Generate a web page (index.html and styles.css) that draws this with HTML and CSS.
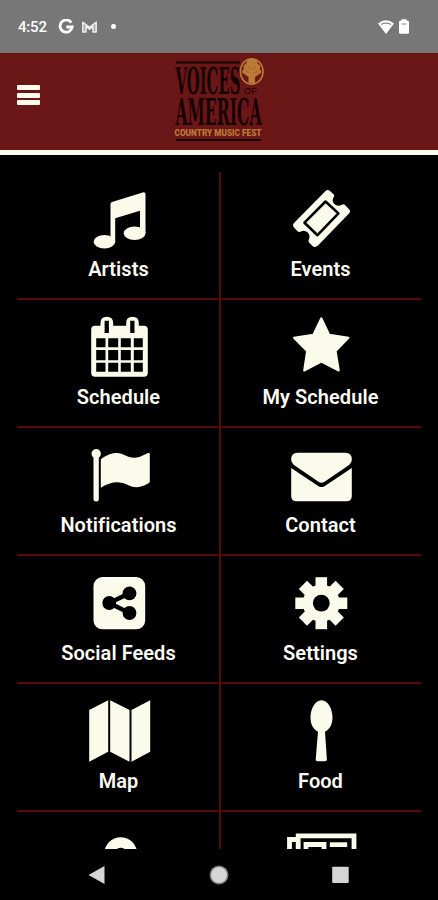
FILE: index.html
```html
<!DOCTYPE html>
<html lang="en">
<head>
  <meta charset="UTF-8" />
  <meta name="viewport" content="width=device-width, initial-scale=1.0"/>
  <title>Voices of America - Country Music Fest</title>
  <link rel="stylesheet" href="styles.css">
</head>
<body>

  <!-- Status Bar -->
  <div class="status-bar">
    <span class="clock">4:52</span>
    <svg class="google" width="16" height="16" viewBox="0 0 16 16"><path d="M13.2 3.6A6.1 6.1 0 1 0 14.2 8H8.3" fill="none" stroke="#fff" stroke-width="2.8"/></svg>
    <svg class="gmail" width="17" height="13" viewBox="0 0 17 13"><path d="M1.8 12V2.2L8.5 7.2 15.2 2.2V12H12V6.5L8.5 9.3 5 6.5V12Z" fill="#aaa" stroke="#f4f4f4" stroke-width="1.4" stroke-linejoin="round"/></svg>
    <span class="dot"></span>
    <svg class="wifi" width="16" height="14" viewBox="0 0 16 14"><path d="M0 3.6Q8-3 16 3.6L8 14Z" fill="#fff"/><path d="M3 4.6Q8 1.8 13 4.6" fill="none" stroke="#8a8a8a" stroke-width="1.2"/></svg>
    <svg class="battery" width="10" height="15" viewBox="0 0 10 15"><path d="M1.2 1.8H2.5V.2H7.5V1.8H8.8Q10 1.8 10 3V13.6Q10 14.8 8.8 14.8H1.2Q0 14.8 0 13.6V3Q0 1.8 1.2 1.8Z" fill="#fff"/><path d="M2.5 5H7.5" stroke="#999" stroke-width="1.2"/></svg>
  </div>

  <!-- Header -->
  <header class="header">
    <button class="menu-button" aria-label="Menu"><span></span><span></span><span></span></button>
    <svg class="logo" width="94" height="86" viewBox="0 0 94 86">
      <path d="M5 5.5H69M5 83H90" stroke="#160304" stroke-width="2"/>
      <text class="logo-big" x="4.500" y="37" textLength="65" lengthAdjust="spacingAndGlyphs">VOICES</text>
      <text class="logo-big" x="4.500" y="68" textLength="86" lengthAdjust="spacingAndGlyphs">AMERICA</text>
      <text class="logo-of" x="73" y="37" textLength="13" lengthAdjust="spacingAndGlyphs">OF</text>
      <text class="logo-sub" x="3.500" y="78.500" textLength="87" lengthAdjust="spacingAndGlyphs">COUNTRY MUSIC FEST</text>
      <ellipse cx="80.700" cy="14.500" rx="11.300" ry="12.700" fill="#6b1616" stroke="#bb7a37" stroke-width="1.700"/>
      <path d="M77.500 26V20L71.500 16Q70.500 13 73 12Q71 8 75 7Q76 2 80.700 1Q86 2 87 7Q91 8 88.500 12Q91 13 90 16L84 20V26Z" fill="#bb7a37"/>
      <path d="M76 9L79.500 12M85 9L82 12M75 14L78 16M86.500 14L83.500 16" stroke="#96552a" stroke-width=".7"/>
    </svg>
  </header>

  <!-- Menu Grid -->
  <main class="menu">
    <div class="menu-grid">
      <a class="menu-item">
        <svg class="icon" viewBox="0 0 80 68"><path d="M31.500 19Q31.500 17.500 33 17L64.500 7.200Q66.500 7 66.500 9V48H61V25.700L36.200 33.300V57H31.500Z"/><ellipse cx="25.400" cy="56.700" rx="10.800" ry="6.700"/><ellipse cx="55.600" cy="48.200" rx="10.900" ry="6.700"/></svg>
        <span>Artists</span>
      </a>
      <a class="menu-item">
        <svg class="icon" viewBox="0 0 80 68"><path d="M44.500 6Q46.800 4 49 6L53 9.700Q53.800 11 52.500 12.500Q50.500 15.500 53 18.800Q56.500 22 60.500 20Q62.500 18.700 64 20L68 24.200Q70 26.200 68 28.500L37 60.500Q34.200 63 31.500 61L28 57.500Q26.800 56 28 54Q29.500 50.500 26.800 47.500Q23.500 44.500 20.500 46.300Q18 47.800 16.500 46.300L13 42.500Q11 40.200 13 38Z"/><path class="cut-line" d="M44.500 16.500L57.400 28.400 36.500 50.200 23.500 37.700Z"/></svg>
        <span>Events</span>
      </a>
      <a class="menu-item">
        <svg class="icon" viewBox="0 0 80 68"><path fill-rule="evenodd" d="M16 12.700H21.500V10Q21.500 3.700 27.800 3.700T34.200 10V12.700H47.200V10Q47.200 3.700 53.500 3.700T59.800 10V12.700H65Q68.800 12.700 68.800 16.500V60Q68.800 63.700 65 63.700H16Q12.200 63.700 12.200 60V16.500Q12.200 12.700 16 12.700ZM25.600 7.700V20H29.900V7.700ZM51.200 7.700V20H55.500V7.700ZM17.200 25.300V34.300H26.500V25.300ZM29.200 25.300V34.300H39.200V25.300ZM41.800 25.300V34.300H51.800V25.300ZM54.800 25.300V34.300H63.800V25.300ZM17.200 37V47.300H26.500V37ZM29.200 37V47.300H39.200V37ZM41.800 37V47.300H51.800V37ZM54.800 37V47.300H63.800V37ZM17.200 49.700V58.700H26.500V49.700ZM29.200 49.700V58.700H39.200V49.700ZM41.800 49.700V58.700H51.800V49.700ZM54.800 49.700V58.700H63.800V49.700Z"/></svg>
        <span>Schedule</span>
      </a>
      <a class="menu-item">
        <svg class="icon" viewBox="0 0 80 68"><path class="rounded" d="M40.300 5.300L48.200 21.800 67.500 24.800 54.600 38 57.800 57.500 40.300 48.700 23.200 57.500 26.100 38 13 24.800 32.400 21.800Z"/></svg>
        <span>My Schedule</span>
      </a>
      <a class="menu-item">
        <svg class="icon" viewBox="0 0 80 68"><circle cx="17.200" cy="12.700" r="4.700"/><path d="M14.500 14H19.800V58Q19.800 60.500 17.200 60.500T14.500 58Z"/><path d="M21.800 18.300C28 13.500 36 10.500 43 13C50 16 54 18 61 15.700L69 12Q70.800 11.500 70.800 13V40.500Q70.800 41.500 69.500 42.300C62 46.500 56 47.500 50 44.500C40 39.500 32 40.500 21.800 46.800Z"/></svg>
        <span>Notifications</span>
      </a>
      <a class="menu-item">
        <svg class="icon" viewBox="0 0 80 68"><path d="M10.200 18.500Q10.200 11.700 16.500 11.700H64.500Q70.800 11.700 70.800 18.500Q70.800 22 67 24.700L43.500 40.800Q40.500 42.500 37.500 40.800L14 24.700Q10.200 22 10.200 18.500Z"/><path d="M10.200 27L37.500 45.200Q40.500 47 43.500 45.200L70.800 27V55Q70.800 60.300 65.500 60.300H15.500Q10.200 60.300 10.200 55Z"/></svg>
        <span>Contact</span>
      </a>
      <a class="menu-item">
        <svg class="icon" viewBox="0 0 80 68"><rect x="14.500" y="8" width="51.700" height="52.300" rx="9"/><path class="share-line" d="M50.500 24.300L30.200 34 50.500 44"/><g class="cut"><circle cx="30.200" cy="34" r="6.900"/><circle cx="50.500" cy="24.300" r="6.900"/><circle cx="50.500" cy="44" r="6.900"/></g></svg>
        <span>Social Feeds</span>
      </a>
      <a class="menu-item">
        <svg class="icon" viewBox="0 0 80 68"><g transform="translate(40.300 34.200)"><circle r="18.500"/><path id="teeth" d="M-5.800-17V-26H5.800V26H-5.800Z"/><use href="#teeth" transform="rotate(45)"/><use href="#teeth" transform="rotate(90)"/><use href="#teeth" transform="rotate(135)"/><circle class="cut" r="8.400"/></g></svg>
        <span>Settings</span>
      </a>
      <a class="menu-item">
        <svg class="icon" viewBox="0 0 80 68"><path d="M10.200 13L29.200 3.300V54.800L10.200 64.700ZM31.200 3.300L50.500 13V64.700L31.200 54.800ZM52.500 13L71.200 3.300V54.800L52.500 64.700Z"/></svg>
        <span>Map</span>
      </a>
      <a class="menu-item">
        <svg class="icon" viewBox="0 0 80 68"><path d="M40.500 3.300C47 3.300 51.500 12 51.500 20.500C51.500 27.500 48.500 32.500 44 34.700L45.900 62.500Q46 64.300 44 64.300H36.500Q34.600 64.300 34.700 62.500L37 34.700C32.500 32.500 29.500 27.500 29.500 20.500C29.500 12 34 3.300 40.500 3.300Z"/></svg>
        <span>Food</span>
      </a>
      <a class="menu-item">
        <svg class="icon" viewBox="0 0 80 68"><path fill-rule="evenodd" d="M41.700 12.200A16.500 16.500 0 0 1 58.200 28.700C58.200 41 41.700 62 41.700 62S25.200 41 25.200 28.700A16.500 16.500 0 0 1 41.700 12.200ZM41.700 22.700A6 6 0 1 0 41.700 34.700 6 6 0 1 0 41.700 22.700Z"/></svg>
      </a>
      <a class="menu-item">
        <svg class="icon" viewBox="0 0 80 68"><path class="news-line" d="M14.800 14.500H8.500V58H73V10.800H17.200V58M25 40V19.500H43V40Z"/><path d="M48.800 17.300H66.200V22H48.800Z"/></svg>
      </a>
    </div>
  </main>

  <!-- Android Nav -->
  <nav class="android-nav">
    <svg viewBox="0 0 20 20"><path d="M1.500 10L17.500 1V19Z"/></svg>
    <svg viewBox="0 0 20 20"><circle cx="10" cy="10" r="9.500" fill="#777"/><circle cx="10" cy="10" r="8"/></svg>
    <svg viewBox="0 0 20 20"><rect x="1.200" y="1.700" width="16.500" height="16.300" rx=".8"/></svg>
  </nav>

</body>
</html>
```

FILE: styles.css
```css
body {
  margin: 0;
  height: 900px;
  display: flex;
  flex-direction: column;
  overflow: hidden;
  background: #000;
  font-family: Roboto, "Liberation Sans", sans-serif;
}

.status-bar {
  box-sizing: border-box;
  height: 53px;
  padding: 0 29px 0 18px;
  display: flex;
  align-items: center;
  flex-shrink: 0;
  background: #777;
}

.clock {
  width: 40px;
  color: #fff;
  font-size: 15px;
  font-weight: 500;
  letter-spacing: -0.2px;
}

.gmail {
  margin-left: 7px;
}

.dot {
  width: 5px;
  height: 5px;
  margin-left: 13px;
  border-radius: 50%;
  background: #fff;
}

.wifi {
  margin-left: auto;
}

.battery {
  margin-left: 5px;
}

.header {
  box-sizing: border-box;
  height: 102px;
  padding: 0 20px 0 17px;
  display: grid;
  grid-template-columns: 1fr auto 1fr;
  flex-shrink: 0;
  background: #6b1616;
  border-bottom: 5px solid #fffbed;
}

.menu-button {
  width: 23px;
  height: 20px;
  margin-top: 32px;
  padding: 0;
  display: flex;
  flex-direction: column;
  justify-content: space-between;
  border: none;
  background: none;
}

.menu-button span {
  height: 5px;
  border-radius: 1px;
  background: #fffbed;
}

.logo {
  margin-top: 4px;
  overflow: visible;
}

.logo-big {
  fill: #160304;
  font-family: "DejaVu Serif Condensed", "DejaVu Serif", serif;
  font-size: 37px;
  font-weight: bold;
}

.logo-of {
  fill: #160304;
  font-family: "Liberation Sans", sans-serif;
  font-size: 9.5px;
}

.logo-sub {
  fill: #bb7a37;
  font-size: 8.5px;
  font-weight: 900;
}

.menu {
  flex: 1;
  min-height: 0;
  padding: 17px 17px 0;
  overflow: hidden;
}

.menu-grid {
  display: grid;
  grid-template-columns: 1fr 1fr;
}

.menu-item {
  box-sizing: border-box;
  height: 128px;
  padding: 13px 0 0 1px;
  display: flex;
  flex-direction: column;
  align-items: center;
  border-bottom: 2px solid #540b0e;
  color: #fdfdf5;
  font-size: 20px;
  font-weight: 600;
  line-height: 24px;
}

.menu-item:nth-child(even) {
  padding: 13px 1px 0 0;
  border-left: 2px solid #540b0e;
}

.menu-item span {
  margin-top: 4px;
  letter-spacing: 0.05px;
}

.icon {
  width: 80px;
  height: 68px;
  fill: #fbfbec;
}

.rounded {
  stroke: #fbfbec;
  stroke-width: 2;
  stroke-linejoin: round;
}

.cut {
  fill: #000;
}

.cut-line {
  fill: none;
  stroke: #000;
  stroke-width: 2.6;
  stroke-linejoin: round;
}

.share-line {
  fill: none;
  stroke: #000;
  stroke-width: 4.5;
}

.news-line {
  fill: none;
  stroke: #fbfbec;
  stroke-width: 4.8;
}

.android-nav {
  height: 51px;
  padding: 0 87px;
  display: flex;
  align-items: center;
  justify-content: space-between;
  flex-shrink: 0;
  background: #000;
}

.android-nav svg {
  width: 20px;
  height: 20px;
  fill: #d5d5d5;
}
```
